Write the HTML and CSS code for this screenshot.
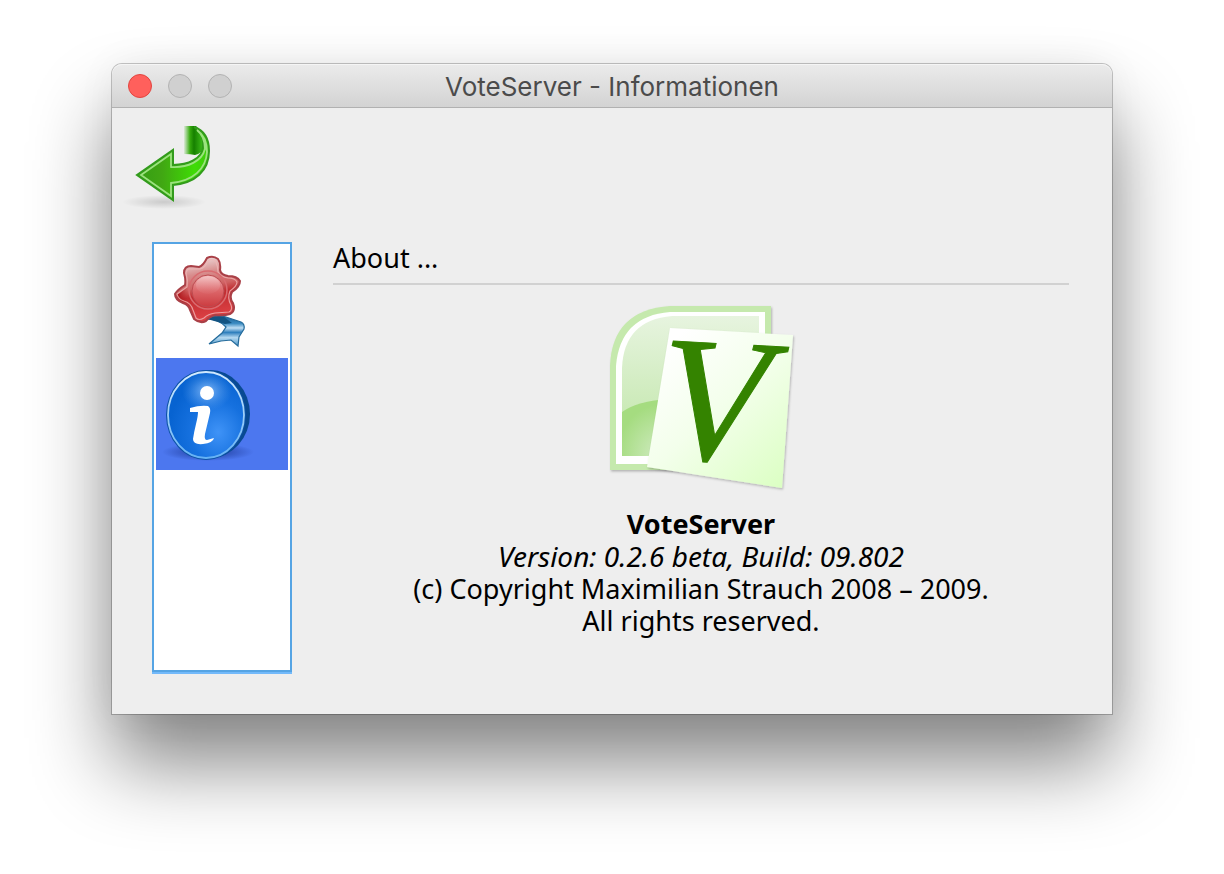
FILE: index.html
```html
<!DOCTYPE html>
<html lang="de">
<head>
<meta charset="utf-8">
<title>VoteServer - Informationen</title>
<link rel="stylesheet" href="styles.css">
</head>
<body>
<div class="window">
  <header class="titlebar">
    <div class="lights">
      <button class="light light-close" type="button" aria-label="Close"></button>
      <button class="light" type="button" aria-label="Minimize" disabled></button>
      <button class="light" type="button" aria-label="Zoom" disabled></button>
    </div>
    <h1 class="title">VoteServer - Informationen</h1>
  </header>

  <div class="toolbar">
    <button class="back" type="button" aria-label="Back">
      <svg width="96" height="96" viewBox="0 0 96 96">
        <defs>
          <radialGradient id="ground"><stop offset="0" stop-color="#000" stop-opacity=".15"/><stop offset="1" stop-color="#000" stop-opacity="0"/></radialGradient>
          <linearGradient id="arrow" x1="0" y1="0" x2="1" y2="0"><stop offset="0" stop-color="#359c14"/><stop offset=".35" stop-color="#41a713"/><stop offset=".8" stop-color="#3fdc05"/><stop offset="1" stop-color="#3fc90d"/></linearGradient>
          <linearGradient id="tail" x1="0" y1="0" x2="1" y2="0"><stop offset="0" stop-color="#3ab313" stop-opacity=".1"/><stop offset=".3" stop-color="#35a90d"/><stop offset=".5" stop-color="#168000"/><stop offset="1" stop-color="#43c41d"/></linearGradient>
        </defs>
        <ellipse cx="44" cy="82" rx="42" ry="7" fill="url(#ground)"/>
        <path d="M64 6H76Q84 12 84 26Q82 34 75 35Q71 34 64 34Z" fill="url(#tail)"/>
        <path d="M74 7Q89 12 89 31C89 51 75 63 53 65V80L17 55L53 30V45C68 45 82 39 83 27C84 17 81 11 74 7Z" fill="url(#arrow)" stroke="#329b1c" stroke-width="2"/>
        <path d="M77 10Q87 17 87 32C86 49 73 61 51 63V76L21 55L51 34V47C68 48 82 41 85 29C85 19 82 14 77 10Z" fill="none" stroke="#9be27f" stroke-width="1.8"/>
      </svg>
    </button>
  </div>

  <main class="content">
    <nav class="sidebar" aria-label="Sections">
      <button class="item" type="button" aria-label="License">
        <svg width="96" height="96" viewBox="1 1 96 96">
          <defs>
            <linearGradient id="seal" x1=".35" y1="0" x2=".55" y2="1"><stop offset="0" stop-color="#eee0e0"/><stop offset=".25" stop-color="#d88e8e"/><stop offset=".46" stop-color="#cf6262"/><stop offset=".58" stop-color="#c02c30"/><stop offset="1" stop-color="#e24448"/></linearGradient>
            <linearGradient id="dome" x1="0" y1="0" x2="0" y2="1"><stop offset="0" stop-color="#edaaac"/><stop offset=".5" stop-color="#dc6669"/><stop offset="1" stop-color="#cb3b3f"/></linearGradient>
            <linearGradient id="dark"><stop offset="0" stop-color="#a80d13"/><stop offset="1" stop-color="#b51b20" stop-opacity="0"/></linearGradient>
            <linearGradient id="shine" x1="0" y1="0" x2="0" y2="1"><stop offset="0" stop-color="#f7d0d0"/><stop offset="1" stop-color="#e07a7d" stop-opacity=".2"/></linearGradient>
            <linearGradient id="ribbon" x1="0" y1="0" x2="0" y2="1"><stop offset="0" stop-color="#1a5f92"/><stop offset=".25" stop-color="#3a8bc2"/><stop offset=".4" stop-color="#bfdef3"/><stop offset=".55" stop-color="#2e7fbd"/><stop offset=".72" stop-color="#b4d8f0"/><stop offset="1" stop-color="#4995c8"/></linearGradient>
          </defs>
          <path d="M49 66Q57 61 67 64L82 69Q86 71 85 76L80 84L79 93L72 87L62 88L50 91L63 80L67 74Q59 66 49 66Z" fill="url(#ribbon)" stroke="#246b9b" stroke-width="1.2"/>
          <path d="M48 66Q56 62 65 64L73 70L66 71Z" fill="#135482"/>
          <path d="M48 5Q54 2 59 6Q62 10 61 17Q62 22 69 23Q78 23 81 28Q81 34 73 39Q70 45 74 50Q77 58 71 61Q65 63 56 62Q50 64 47 68Q41 71 35 66L31 57Q30 52 24 50Q16 47 16 41Q18 37 26 32Q27 27 25 20Q25 13 32 13L40 14Q44 13 48 5Z" fill="url(#seal)" stroke="#a94047" stroke-width="2"/>
          <path d="M18 42L29 34V51Q19 48 18 42Z" fill="url(#dark)"/>
          <path d="M49 8Q54 5 57 9Q59 14 59 19Q62 24 69 25Q76 25 78 29Q78 33 71 38Q68 45 72 52Q74 57 70 59L56 60Q49 61 45 65Q40 68 37 65L34 57Q32 50 25 48Q19 46 18 41L28 34Q29 27 27 20Q28 15 32 16L41 16Q46 15 49 8Z" fill="none" stroke="#efb6b6" stroke-width="1.2" opacity=".8"/>
          <circle cx="49" cy="37" r="19" fill="none" stroke="#d96b70" stroke-width="1.5"/>
          <circle cx="49" cy="38" r="16" fill="url(#dome)" stroke="#bd4b50"/>
          <ellipse cx="49" cy="32" rx="12" ry="9" fill="url(#shine)" opacity=".75"/>
        </svg>
      </button>
      <button class="item item-selected" type="button" aria-label="About" aria-current="page">
        <svg width="96" height="96" viewBox="0 0 96 96">
          <defs>
            <radialGradient id="disc" cx=".66" cy=".7" r=".65"><stop offset="0" stop-color="#3f93f7"/><stop offset=".55" stop-color="#1671df"/><stop offset="1" stop-color="#0763d1"/></radialGradient>
            <radialGradient id="glow"><stop offset="0" stop-color="#a6d0ff" stop-opacity=".75"/><stop offset="1" stop-color="#5da2f0" stop-opacity="0"/></radialGradient>
            <radialGradient id="shade"><stop offset=".4" stop-color="#122c84" stop-opacity=".5"/><stop offset="1" stop-color="#122c84" stop-opacity="0"/></radialGradient>
            <linearGradient id="ring" x1="0" y1="0" x2="0" y2="1"><stop offset="0" stop-color="#d4ecff"/><stop offset="1" stop-color="#65b2f5"/></linearGradient>
          </defs>
          <ellipse cx="48" cy="86" rx="46" ry="9" fill="url(#shade)"/>
          <ellipse cx="50" cy="48" rx="40" ry="44" fill="#084a92"/>
          <ellipse cx="46" cy="49" rx="40" ry="45" fill="#0c52a4"/>
          <ellipse cx="46" cy="49" rx="38" ry="43" fill="url(#disc)" stroke="url(#ring)" stroke-width="1.8"/>
          <ellipse cx="47" cy="25" rx="25" ry="20" fill="url(#glow)"/>
          <circle cx="47" cy="27" r="7" fill="#fff"/>
          <path d="M30 42Q40 39 48 40Q51 42 50 47L45 68Q44 74 47 74L54 72Q53 77 43 78Q33 79 33 73Q34 66 36 58Q38 50 38 46L30 46Z" fill="#fff"/>
        </svg>
      </button>
    </nav>

    <section class="about">
      <h2 class="heading">About ...</h2>
      <svg class="logo" width="204" height="204" viewBox="0 0 204 204" role="img" aria-label="VoteServer">
        <defs>
          <linearGradient id="panel" x1="0" y1="0" x2="0" y2="1"><stop offset="0" stop-color="#e7f4df"/><stop offset="1" stop-color="#bde5a4"/></linearGradient>
          <radialGradient id="hill" cx=".8" cy="1" r=".9"><stop offset="0" stop-color="#d0ebc1"/><stop offset="1" stop-color="#a5dc80"/></radialGradient>
          <linearGradient id="paper" x1=".15" y1=".1" x2=".9" y2="1"><stop offset="0" stop-color="#fff"/><stop offset=".45" stop-color="#f3ffeb"/><stop offset="1" stop-color="#dcffc4"/></linearGradient>
          <filter id="drop" x="-10%" y="-10%" width="120%" height="120%"><feDropShadow dx="1" dy="1.5" stdDeviation="1.2" flood-opacity=".25"/></filter>
        </defs>
        <path d="M11 174V70Q13 14 71 10H172V174Z" fill="#c5e9ad" filter="url(#drop)"/>
        <path d="M17 168V70Q21 20 71 16H166V168Z" fill="#fff"/>
        <path d="M23 160V72Q25 24 73 20H160V160Z" fill="url(#panel)"/>
        <path d="M23 160V116Q38 105 70 103V160Z" fill="url(#hill)"/>
        <path d="M71 32L194 39L183 192L48 171Z" fill="url(#paper)" filter="url(#drop)"/>
        <text class="logo-letter" x="58" y="161" transform="rotate(3 58 161)">V</text>
      </svg>
      <div class="credits">
        <strong>VoteServer</strong><br>
        <em>Version: 0.2.6 beta, Build: 09.802</em><br>
        (c) Copyright Maximilian Strauch 2008 – 2009.<br>
        All rights reserved.
      </div>
    </section>
  </main>
</div>
</body>
</html>
```
FILE: styles.css
```css
* { box-sizing: border-box; }

body {
  margin: 0;
  min-height: 100vh;
  display: flex;
  padding: 64px 112px 160px;
  background: #fff;
  color: #000;
  font-family: "Noto Sans", "Lucida Grande", sans-serif;
  font-size: 27px;
  line-height: 32px;
}

button {
  padding: 0;
  border: 0;
  background: none;
  font: inherit;
}

svg { display: block; }

.window {
  flex: 1;
  display: flex;
  flex-direction: column;
  background: #eee;
  border-radius: 10px 10px 0 0;
  box-shadow: 0 0 0 1px rgba(0, 0, 0, .22), 0 50px 80px rgba(0, 0, 0, .48), 0 0 40px rgba(0, 0, 0, .05);
}

.titlebar {
  display: grid;
  grid-template-columns: 1fr auto 1fr;
  align-items: center;
  height: 44px;
  padding: 0 16px;
  border-bottom: 1px solid #b1b1b1;
  border-radius: 10px 10px 0 0;
  background: linear-gradient(#ebebeb, #d3d3d3);
  box-shadow: inset 0 1px 0 #f5f5f5;
}

.lights { display: flex; gap: 16px; }

.light {
  width: 24px;
  height: 24px;
  border: 1px solid #b3b3b3;
  border-radius: 50%;
  background: #d0d0d0;
}

.light-close { border-color: #e2453f; background: #ff605c; }

.title {
  margin: 0;
  padding-top: 2px;
  color: #4b4b4b;
  font: 400 26px/32px Inter, Roboto, sans-serif;
}

.toolbar {
  display: flex;
  padding: 12px 8px 0;
}

.content {
  flex: 1;
  display: flex;
  gap: 41px;
  padding: 26px 40px 40px;
}

.sidebar {
  width: 140px;
  margin-bottom: 2px;
  padding: 2px;
  border: 2px solid #55a4e4;
  background: #fff;
  box-shadow: 0 2px 0 #72b9fa;
}

.item {
  display: block;
  width: 100%;
  height: 112px;
  padding: 8px 4px;
}

.item-selected { background: #4c77ef; }

.about {
  flex: 1;
  display: flex;
  flex-direction: column;
  align-items: center;
  padding-right: 3px;
}

.heading {
  align-self: stretch;
  margin: 0;
  padding-bottom: 9px;
  border-bottom: 2px solid #d1d1d1;
  font-size: 27px;
  font-weight: 400;
  line-height: 32px;
}

.logo {
  margin-top: 11px;
  overflow: visible;
}

.logo-letter {
  fill: #348300;
  stroke: #348300;
  font: italic 400 178px "Liberation Serif", serif;
}

.credits {
  margin-top: 8px;
  text-align: center;
}

.credits em {
  font-size: 28px;
}
```
